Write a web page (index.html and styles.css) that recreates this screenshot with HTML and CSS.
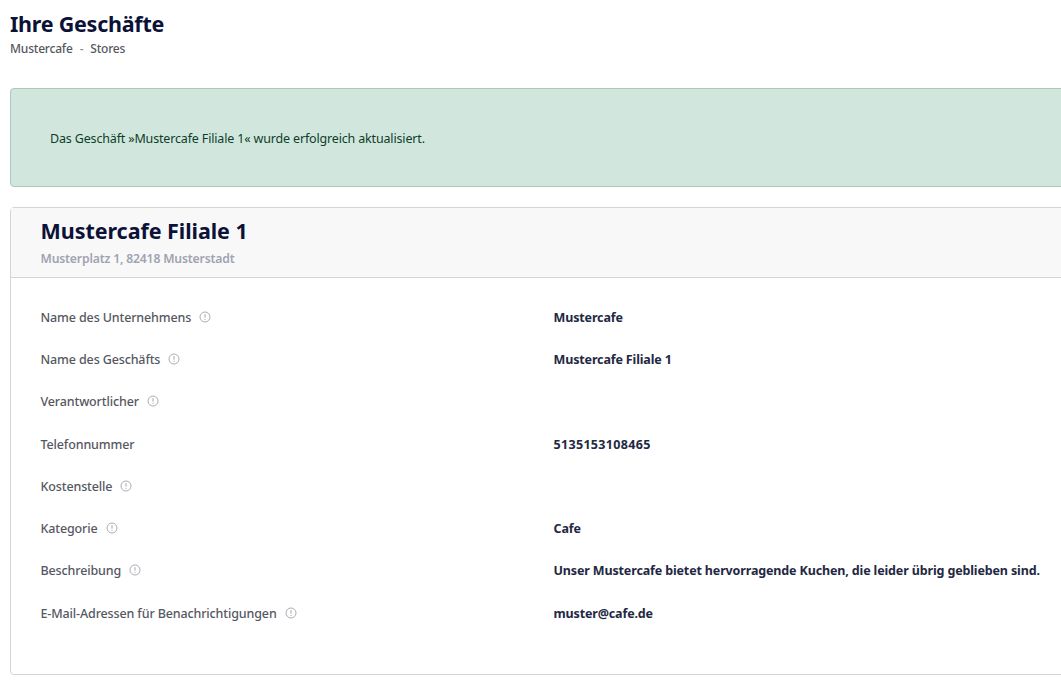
FILE: index.html
```html
<!DOCTYPE html>
<html lang="de">
<head>
<meta charset="utf-8">
<title>Ihre Geschäfte</title>
<link rel="stylesheet" href="styles.css">
</head>
<body>
<svg class="defs" width="0" height="0" aria-hidden="true">
  <symbol id="info" viewBox="0 0 12 12">
    <circle cx="6" cy="6" r="5" fill="none" stroke="currentColor" stroke-width="0.9"/>
    <path d="M6 3.2V6.6M6 7.8V8.8" fill="none" stroke="currentColor" stroke-width="1"/>
  </symbol>
</svg>
<main class="page">
  <header class="head">
    <h1 class="title">Ihre Geschäfte</h1>
    <div class="crumbs"><span>Mustercafe</span><span class="sep">-</span><span>Stores</span></div>
  </header>
  <div class="alert">Das Geschäft »Mustercafe Filiale 1« wurde erfolgreich aktualisiert.</div>
  <section class="card">
    <div class="card-head">
      <h2 class="card-title">Mustercafe Filiale 1</h2>
      <div class="card-sub">Musterplatz 1, 82418 Musterstadt</div>
    </div>
    <dl class="rows">
      <div class="row"><dt class="label">Name des Unternehmens <svg class="info"><use href="#info"/></svg></dt><dd class="value">Mustercafe</dd></div>
      <div class="row"><dt class="label">Name des Geschäfts <svg class="info"><use href="#info"/></svg></dt><dd class="value">Mustercafe Filiale 1</dd></div>
      <div class="row"><dt class="label">Verantwortlicher <svg class="info"><use href="#info"/></svg></dt><dd class="value"></dd></div>
      <div class="row"><dt class="label">Telefonnummer</dt><dd class="value phone">5135153108465</dd></div>
      <div class="row"><dt class="label">Kostenstelle <svg class="info"><use href="#info"/></svg></dt><dd class="value"></dd></div>
      <div class="row"><dt class="label">Kategorie <svg class="info"><use href="#info"/></svg></dt><dd class="value">Cafe</dd></div>
      <div class="row"><dt class="label">Beschreibung <svg class="info"><use href="#info"/></svg></dt><dd class="value">Unser Mustercafe bietet hervorragende Kuchen, die leider übrig geblieben sind.</dd></div>
      <div class="row"><dt class="label">E-Mail-Adressen für Benachrichtigungen <svg class="info"><use href="#info"/></svg></dt><dd class="value">muster@cafe.de</dd></div>
    </dl>
  </section>
</main>
</body>
</html>
```
FILE: styles.css
```css
html, body { margin: 0; padding: 0; background: #fff; overflow: hidden; }
body { width: 1061px; height: 693px; font-family: "Noto Sans", "Open Sans", sans-serif; font-size: 12.5px; color: #4b4f5c; }
.defs { position: absolute; }
.page { width: 1120px; padding: 11px 0 0 10px; }
.head { height: 77px; }
.title { margin: 0; font-size: 21.5px; line-height: 26px; font-weight: 700; color: #0c1237; letter-spacing: -0.25px; }
.crumbs { display: flex; gap: 7px; margin-top: 4px; font-size: 12px; line-height: 16px; letter-spacing: -0.2px; font-weight: 500; color: #55585f; }
.sep { color: #8a8d94; }
.alert { height: 99px; display: flex; align-items: center; padding: 2px 0 0 39px; box-sizing: border-box; background: #d1e7dd; border: 1px solid #a9c9bb; border-radius: 4px; color: #0f3d2a; letter-spacing: -0.16px; }
.card { margin-top: 20px; height: 466px; border: 1px solid #d5d5d8; border-radius: 4px; }
.card-head { height: 69px; padding-left: 29.5px; background: #f8f8f9; border-bottom: 1px solid #d5d5d8; }
.card-title { margin: 0; padding-top: 8px; font-size: 21.5px; line-height: 30px; font-weight: 700; color: #0c1237; letter-spacing: -0.05px; }
.card-sub { margin-top: 4px; font-size: 12.2px; line-height: 18px; font-weight: 600; letter-spacing: -0.17px; color: #a0a3b1; }
.rows { margin: 0; padding: 18px 0 0 29.5px; }
.row { display: grid; grid-template-columns: 513px 1fr; height: 42.3px; align-items: center; }
.label { color: #55585f; font-weight: 500; letter-spacing: -0.13px; }
.value { margin: 0; font-weight: 700; color: #232842; letter-spacing: -0.14px; }
.phone { letter-spacing: 0.32px; }
.info { width: 12px; height: 12px; margin-left: 5px; vertical-align: -1px; color: #a2a4ad; }
```
